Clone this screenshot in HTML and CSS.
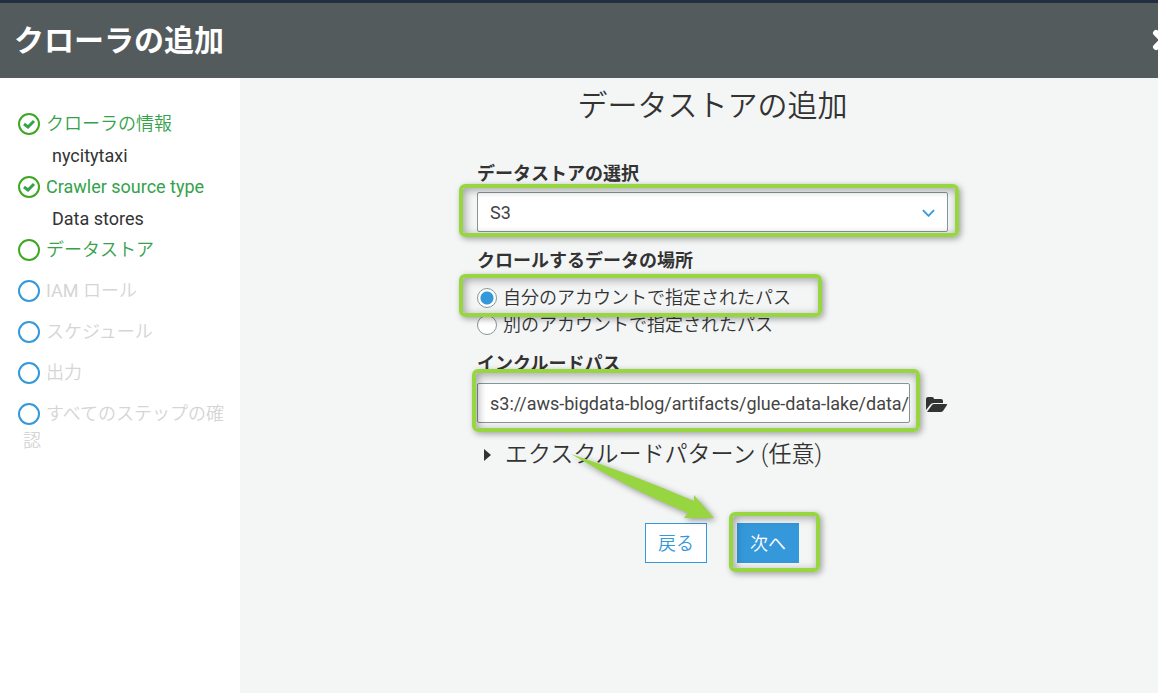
FILE: index.html
```
<!DOCTYPE html>
<html lang="ja">
<head>
    <meta charset="UTF-8">
    <meta name="viewport" content="width=device-width, initial-scale=1.0">
    <title>クローラの追加</title>
    <link rel="stylesheet" href="styles.css">
</head>
<body>
    <header class="header">
        <h1>クローラの追加</h1>
        <button class="close" type="button" aria-label="閉じる">
            <svg width="24" height="24" viewBox="0 0 24 24"><path d="M5 4L19 18M19 4L5 18"/></svg>
        </button>
    </header>

    <div class="layout">
        <nav class="sidebar">
            <ol class="steps">
                <li class="step done has-value">
                    <svg class="mark" viewBox="0 0 22 22"><circle cx="11" cy="11" r="10"/><path d="M6 11L10 14L16 8"/></svg>クローラの情報
                    <div class="value">nycitytaxi</div>
                </li>
                <li class="step done has-value">
                    <svg class="mark" viewBox="0 0 22 22"><circle cx="11" cy="11" r="10"/><path d="M6 11L10 14L16 8"/></svg><span class="latin">Crawler source type</span>
                    <div class="value">Data stores</div>
                </li>
                <li class="step done">
                    <svg class="mark" viewBox="0 0 22 22"><circle cx="11" cy="11" r="10"/></svg>データストア
                </li>
                <li class="step">
                    <svg class="mark" viewBox="0 0 22 22"><circle cx="11" cy="11" r="10"/></svg><span class="latin">IAM</span> ロール
                </li>
                <li class="step">
                    <svg class="mark" viewBox="0 0 22 22"><circle cx="11" cy="11" r="10"/></svg>スケジュール
                </li>
                <li class="step">
                    <svg class="mark" viewBox="0 0 22 22"><circle cx="11" cy="11" r="10"/></svg>出力
                </li>
                <li class="step">
                    <svg class="mark" viewBox="0 0 22 22"><circle cx="11" cy="11" r="10"/></svg>すべてのステップの確認
                </li>
            </ol>
        </nav>

        <main class="main">
            <h2>データストアの追加</h2>
            <form class="form">
                <div class="field">
                    <label class="label" for="store">データストアの選択</label>
                    <div class="select-box">
                        <select id="store">
                            <option>S3</option>
                        </select>
                        <svg class="chevron" viewBox="0 0 14 8"><path d="M1 1L7 7L13 1"/></svg>
                        <span class="highlight highlight-select"></span>
                    </div>
                </div>

                <fieldset class="field location">
                    <legend class="label">クロールするデータの場所</legend>
                    <div class="radio-row">
                        <input type="radio" name="location" id="own" checked>
                        <label for="own">自分のアカウントで指定されたパス</label>
                        <span class="highlight highlight-radio"></span>
                    </div>
                    <div class="radio-row">
                        <input type="radio" name="location" id="other">
                        <label for="other">別のアカウントで指定されたパス</label>
                    </div>
                </fieldset>

                <div class="field">
                    <label class="label" for="path">インクルードパス</label>
                    <div class="path-row">
                        <div class="path-box">
                            <input type="text" id="path" value="s3://aws-bigdata-blog/artifacts/glue-data-lake/data/">
                            <span class="highlight highlight-path"></span>
                        </div>
                        <button class="browse" type="button" aria-label="参照">
                            <svg width="22" height="16" viewBox="0 0 22 16"><path d="M0 13V2Q0 0 2 0H6Q8 0 8 2H15Q17 2 17 4V6H8Q5 6 4 8L0 13Z"/><path d="M1 15L6 8Q7 7 8 7H20Q22 7 21 8L17 14Q16 15 15 15Z"/></svg>
                        </button>
                    </div>
                </div>

                <details class="exclude">
                    <summary><svg class="caret" viewBox="0 0 7 12"><path d="M0 0L7 6L0 12Z"/></svg>エクスクルードパターン (任意)</summary>
                </details>

                <div class="actions">
                    <button class="btn" type="button">戻る</button>
                    <div class="next-box">
                        <button class="btn btn-primary" type="button">次へ</button>
                        <span class="highlight highlight-next"></span>
                    </div>
                    <svg class="arrow" viewBox="0 0 144 66"><path d="M0 0Q60 20 123 47L123 41L143 64L113 64L117 59Q60 36 0 0Z"/></svg>
                </div>
            </form>
        </main>
    </div>
</body>
</html>
```

FILE: styles.css
```
* {
    box-sizing: border-box;
}
body {
    margin: 0;
    min-height: 100vh;
    display: flex;
    flex-direction: column;
    overflow-x: hidden;
    background-color: #f4f6f6;
    color: #333;
    font-family: Roboto, "Noto Sans CJK JP", sans-serif;
    font-size: 18px;
    font-weight: 350;
    line-height: 27px;
}
button, input, select {
    font: inherit;
}
.header {
    display: flex;
    align-items: center;
    justify-content: space-between;
    height: 78px;
    padding-left: 14px;
    overflow: hidden;
    border-top: 3px solid #232f3e;
    background-color: #545b5d;
    color: #fff;
}
.header h1 {
    margin: 0;
    font-size: 30px;
    line-height: 40px;
}
.close {
    flex: none;
    display: flex;
    margin-right: -17px;
    padding: 0;
    border: 0;
    background: none;
}
.close path {
    fill: none;
    stroke: #fff;
    stroke-width: 6;
    stroke-linecap: round;
}
.layout {
    flex: 1;
    display: flex;
}
.sidebar {
    flex: none;
    width: 240px;
    padding: 32px 8px 32px 23px;
    background-color: #fff;
}
.steps {
    margin: 0;
    padding: 0;
    list-style: none;
}
.step {
    margin-bottom: 14px;
    text-indent: -5px;
    color: #d5d5d5;
}
.has-value {
    margin-bottom: 4px;
}
.done {
    color: #34a24a;
}
.latin {
    font-weight: 400;
}
.mark {
    width: 22px;
    height: 22px;
    margin-right: 6px;
    vertical-align: -5px;
    fill: none;
    stroke: #3498db;
    stroke-width: 2;
}
.done .mark {
    stroke: #3fa722;
}
.mark path {
    stroke: #34a24a;
    stroke-width: 3;
}
.value {
    margin-top: 5px;
    padding-left: 29px;
    text-indent: 0;
    color: #333;
    font-weight: 400;
}
.main {
    flex: 1;
    padding: 8px 0 32px 27px;
}
.main h2 {
    margin: 0 0 34px;
    text-align: center;
    font-size: 30px;
    font-weight: 350;
    line-height: 40px;
}
.form {
    max-width: 471px;
    margin: 0 auto;
}
.field {
    margin: 0 0 15px;
    padding: 0;
    border: 0;
}
.label {
    display: block;
    padding: 0;
    margin-bottom: 5px;
    font-weight: 700;
}
.select-box, .path-box, .next-box, .radio-row {
    position: relative;
}
.select-box select, .path-box input {
    display: block;
    width: 100%;
    height: 40px;
    padding: 0 0 0 12px;
    border: 1px solid #879596;
    border-radius: 2px;
    background-color: #fff;
    color: #444;
    font-weight: 400;
    appearance: none;
}
.chevron {
    position: absolute;
    top: 17px;
    right: 13px;
    width: 13px;
    height: 8px;
    fill: none;
    stroke: #3498db;
    stroke-width: 2;
}
.radio-row {
    display: flex;
    align-items: center;
    gap: 6px;
}
.location {
    margin-bottom: 12px;
}
.location .label {
    margin-bottom: 10px;
}
.radio-row input {
    appearance: none;
    width: 20px;
    height: 20px;
    margin: 0;
    border: 1px solid #879596;
    border-radius: 50%;
    background-color: #fff;
}
.radio-row input:checked {
    background-image: radial-gradient(circle, #3498db 6px, #fff 7px);
}
.path-row {
    display: flex;
    align-items: center;
    gap: 16px;
}
.path-box {
    flex: 1;
}
.path-row {
    margin-top: 6px;
}
.browse {
    display: flex;
    padding: 4px 0 0;
    border: 0;
    background: none;
    fill: #333;
}
.exclude {
    margin-bottom: 51px;
    font-size: 23px;
    line-height: 34px;
}
.exclude summary {
    display: flex;
    align-items: center;
    gap: 14px;
    padding-left: 7px;
    list-style: none;
}
.caret {
    width: 7px;
    height: 12px;
    fill: #333;
}
.actions {
    position: relative;
    display: flex;
    justify-content: center;
    gap: 30px;
    padding-left: 19px;
}
.btn {
    display: block;
    height: 40px;
    padding: 0 12px;
    border: 1px solid #3498db;
    background-color: #fff;
    color: #3498db;
}
.btn-primary {
    background-color: #3498db;
    color: #fff;
}
/* marker boxes drawn over the form */
.highlight {
    position: absolute;
    border: 4px solid #97d641;
    border-radius: 6px;
    box-shadow: 2px 2px 6px rgba(0,0,0,0.35), inset 2px 2px 8px rgba(0,0,0,0.35);
    pointer-events: none;
    z-index: 1;
}
.highlight-select {
    inset: -8px -11px -5px -18px;
}
.highlight-radio {
    inset: -10px 126px -6px -18px;
}
.highlight-path {
    inset: -14px -10px -9px -5px;
}
.highlight-next {
    inset: -11px -21px -9px -8px;
}
.arrow {
    position: absolute;
    top: -69px;
    left: 94px;
    width: 144px;
    height: 66px;
    overflow: visible;
    fill: #97d641;
    filter: drop-shadow(2px 2px 3px rgba(0,0,0,0.4));
    pointer-events: none;
}
```
